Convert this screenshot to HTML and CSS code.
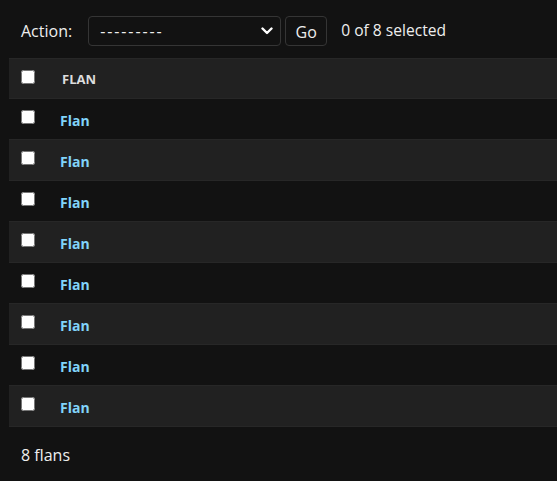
FILE: index.html
```html
<!DOCTYPE html>
<html lang="en">
<head>
<meta charset="utf-8">
<title>Select flan to change</title>
<link rel="stylesheet" href="styles.css">
</head>
<body>
<div class="changelist">
  <div class="actions">
    <label class="action-label">Action:</label>
    <div class="select">
      <span class="select-value">---------</span>
      <svg class="chevron" width="12" height="8" viewBox="0 0 12 8"><path d="M1.5 1.5 L6 6 L10.5 1.5" fill="none" stroke="#ffffff" stroke-width="2.4" stroke-linecap="round" stroke-linejoin="round"/></svg>
    </div>
    <button class="go">Go</button>
    <span class="counter">0 of 8 selected</span>
  </div>
  <table class="result-list">
    <thead>
      <tr>
        <th class="cb-col"><input type="checkbox"></th>
        <th class="name-col">FLAN</th>
      </tr>
    </thead>
    <tbody>
      <tr><td class="cb-col"><input type="checkbox"></td><th class="name-cell"><a href="#">Flan</a></th></tr>
      <tr><td class="cb-col"><input type="checkbox"></td><th class="name-cell"><a href="#">Flan</a></th></tr>
      <tr><td class="cb-col"><input type="checkbox"></td><th class="name-cell"><a href="#">Flan</a></th></tr>
      <tr><td class="cb-col"><input type="checkbox"></td><th class="name-cell"><a href="#">Flan</a></th></tr>
      <tr><td class="cb-col"><input type="checkbox"></td><th class="name-cell"><a href="#">Flan</a></th></tr>
      <tr><td class="cb-col"><input type="checkbox"></td><th class="name-cell"><a href="#">Flan</a></th></tr>
      <tr><td class="cb-col"><input type="checkbox"></td><th class="name-cell"><a href="#">Flan</a></th></tr>
      <tr><td class="cb-col"><input type="checkbox"></td><th class="name-cell"><a href="#">Flan</a></th></tr>
    </tbody>
  </table>
  <p class="paginator">8 flans</p>
</div>
</body>
</html>
```
FILE: styles.css
```css
html, body {
  margin: 0;
  background: #121212;
  color: #eeeeee;
  font-family: "Open Sans", "Noto Sans", sans-serif;
}

.changelist {
  padding: 16px 0 0 9px;
}

.actions {
  display: flex;
  align-items: center;
  height: 30px;
  padding-left: 12px;
  margin-bottom: 12px;
  font-size: 16px;
}

.action-label {
  margin-right: 16px;
}

.select {
  box-sizing: border-box;
  width: 193px;
  height: 30px;
  border: 1px solid #353535;
  border-radius: 4px;
  display: flex;
  align-items: center;
  justify-content: space-between;
  padding: 0 7px 0 11px;
  font-size: 16px;
}

.select-value {
  letter-spacing: 1.9px;
}

.chevron {
  display: block;
}

.go {
  box-sizing: border-box;
  height: 30px;
  width: 42px;
  margin-left: 4px;
  border: 1px solid #353535;
  border-radius: 4px;
  background: #121212;
  color: #eeeeee;
  font-family: inherit;
  font-size: 16px;
  padding: 2px 0 0;
}

.counter {
  margin-left: 14px;
  margin-top: -3px;
  font-size: 15.6px;
}

.result-list {
  width: 100%;
  border-collapse: collapse;
}

.result-list th,
.result-list td {
  height: 41px;
  box-sizing: border-box;
  padding: 0;
  text-align: left;
  border-bottom: 1px solid #272727;
}

.result-list thead th {
  height: 40px;
  background: #212121;
  border-top: 1px solid #272727;
  color: #dddddd;
  font-size: 13px;
  font-weight: 700;
}

.result-list tbody tr:nth-child(even) th,
.result-list tbody tr:nth-child(even) td {
  background: #212121;
}

.cb-col {
  width: 43px;
}

.cb-col input {
  display: block;
  margin: -4px 0 0 12px;
  width: 14px;
  height: 14px;
}

.name-col {
  padding-left: 10px !important;
  padding-top: 1px !important;
}

.name-cell {
  padding-left: 8px !important;
  padding-top: 1px !important;
}

.name-cell a {
  color: #81d4fa;
  text-decoration: none;
  font-size: 14px;
  font-weight: 700;
}

.paginator {
  margin: 0;
  padding: 17px 0 0 12px;
  font-size: 16px;
}
```
